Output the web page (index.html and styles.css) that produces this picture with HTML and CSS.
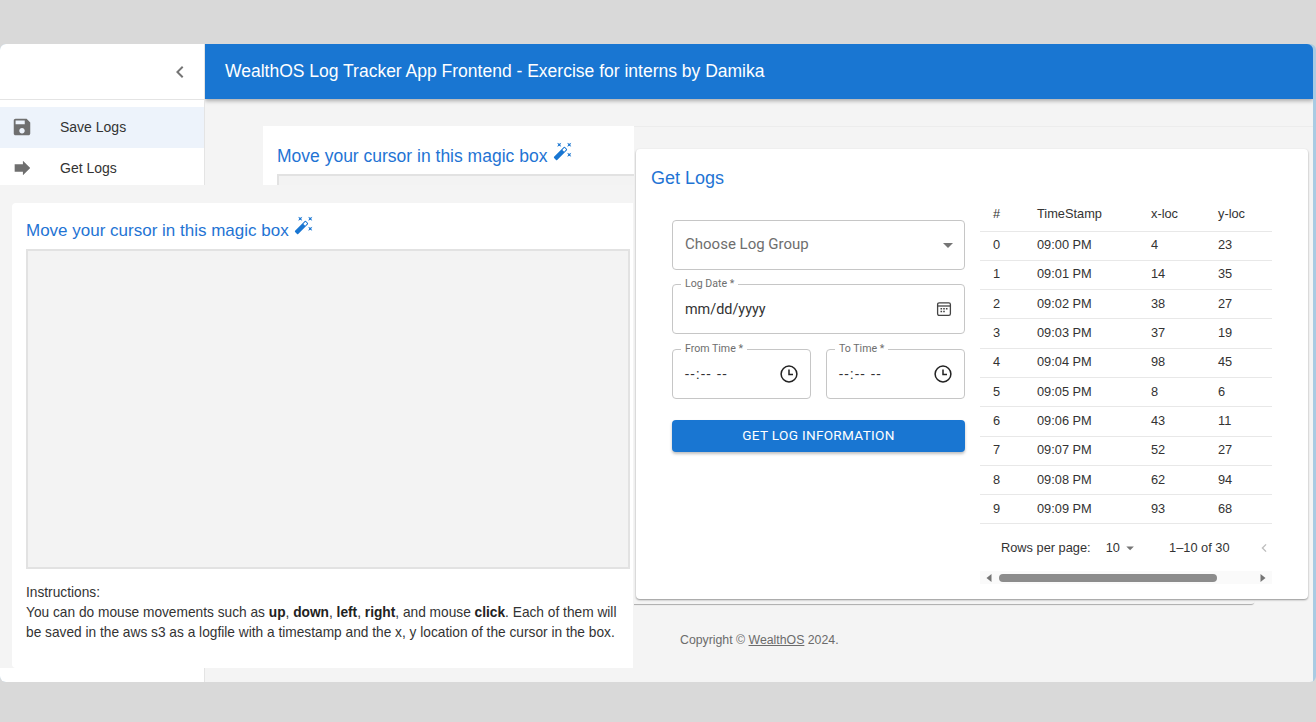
FILE: index.html
```html
<!DOCTYPE html>
<html lang="en">
<head>
<meta charset="utf-8">
<title>WealthOS Log Tracker</title>
<link rel="stylesheet" href="styles.css">
</head>
<body>
<div class="app">
  <aside class="sidebar">
    <div class="side-head">
      <svg class="chev" viewBox="0 0 24 24"><path d="M15.41 7.41 14 6l-6 6 6 6 1.41-1.41L10.83 12z"/></svg>
    </div>
    <nav class="side-list">
      <a class="side-item selected">
        <svg class="side-icon" viewBox="0 0 24 24"><path d="M17 3H5c-1.11 0-2 .9-2 2v14c0 1.1.89 2 2 2h14c1.1 0 2-.9 2-2V7l-4-4zm-5 16c-1.66 0-3-1.34-3-3s1.34-3 3-3 3 1.34 3 3-1.34 3-3 3zm3-10H5V5h10v4z"/></svg>
        <span>Save Logs</span>
      </a>
      <a class="side-item">
        <svg class="side-icon" viewBox="0 0 24 24"><path d="M4 8h9V4l8 8-8 8v-4H4z"/></svg>
        <span>Get Logs</span>
      </a>
    </nav>
  </aside>
  <div class="main">
    <header class="topbar">WealthOS Log Tracker App Frontend - Exercise for interns by Damika</header>
    <div class="content">
      <section class="back-card">
        <div class="back-left">
          <h2 class="magic-title">Move your cursor in this magic box <svg class="wand" viewBox="0 0 24 24"><path d="M7.5 5.6 10 7 8.6 4.5 10 2 7.5 3.4 5 2l1.4 2.5L5 7zm12 9.8L17 14l1.4 2.5L17 19l2.5-1.4L22 19l-1.4-2.5L22 14zM22 2l-2.5 1.4L17 2l1.4 2.5L17 7l2.5-1.4L22 7l-1.4-2.5zm-7.63 5.29a.9959.9959 0 0 0-1.41 0L1.29 18.96c-.39.39-.39 1.02 0 1.41l2.34 2.34c.39.39 1.02.39 1.41 0L16.7 11.05c.39-.39.39-1.02 0-1.41l-2.33-2.35zm-1.03 5.49-2.12-2.12 2.44-2.44 2.12 2.12-2.44 2.44z"/></svg></h2>
          <div class="back-box"></div>
        </div>
      </section>
      <footer class="copyright">Copyright © <a class="copy-link">WealthOS</a> 2024.</footer>
    </div>
  </div>
</div>

<div class="hairline"></div>

<section class="magic-panel">
  <div class="magic-card">
    <h2 class="magic-title front-title">Move your cursor in this magic box <svg class="wand" viewBox="0 0 24 24"><path d="M7.5 5.6 10 7 8.6 4.5 10 2 7.5 3.4 5 2l1.4 2.5L5 7zm12 9.8L17 14l1.4 2.5L17 19l2.5-1.4L22 19l-1.4-2.5L22 14zM22 2l-2.5 1.4L17 2l1.4 2.5L17 7l2.5-1.4L22 7l-1.4-2.5zm-7.63 5.29a.9959.9959 0 0 0-1.41 0L1.29 18.96c-.39.39-.39 1.02 0 1.41l2.34 2.34c.39.39 1.02.39 1.41 0L16.7 11.05c.39-.39.39-1.02 0-1.41l-2.33-2.35zm-1.03 5.49-2.12-2.12 2.44-2.44 2.12 2.12-2.44 2.44z"/></svg></h2>
    <div class="magic-box"></div>
    <p class="instructions">Instructions:<br>You can do mouse movements such as <b>up</b>, <b>down</b>, <b>left</b>, <b>right</b>, and mouse <b>click</b>. Each of them will be saved in the aws s3 as a logfile with a timestamp and the x, y location of the cursor in the box.</p>
  </div>
</section>

<section class="logs-card">
  <h2 class="logs-title">Get Logs</h2>
  <div class="logs-body">
    <form class="log-form">
      <div class="field select-field">
        <span class="placeholder">Choose Log Group</span>
        <svg class="drop" viewBox="0 0 24 24"><path d="M7 10l5 5 5-5z"/></svg>
      </div>
      <div class="field">
        <span class="float-label">Log Date *</span>
        <span class="value">mm/dd/yyyy</span>
        <svg class="cal" viewBox="0 0 16 16"><rect x="1.6" y="1.8" width="12.8" height="12.6" rx="1.6"/><path d="M1.6 5h12.8"/><path class="cal-dots" d="M4.5 7h1.6v1.4H4.5zM7.2 7h1.6v1.4H7.2zM9.9 7h1.6v1.4H9.9zM4.5 9.8h1.6v1.4H4.5zM7.2 9.8h1.6v1.4H7.2z"/></svg>
      </div>
      <div class="time-row">
        <div class="field">
          <span class="float-label">From Time *</span>
          <span class="value time-value">--:-- --</span>
          <svg class="clock" viewBox="0 0 18 18"><circle cx="9" cy="9" r="7.9"/><path d="M9 4.5V9.5H13"/></svg>
        </div>
        <div class="field">
          <span class="float-label">To Time *</span>
          <span class="value time-value">--:-- --</span>
          <svg class="clock" viewBox="0 0 18 18"><circle cx="9" cy="9" r="7.9"/><path d="M9 4.5V9.5H13"/></svg>
        </div>
      </div>
      <button class="submit" type="button">GET LOG INFORMATION</button>
    </form>
    <div class="table-wrap">
      <table class="log-table">
        <colgroup><col class="c-id"><col class="c-time"><col class="c-x"><col class="c-y"></colgroup>
        <thead><tr><th>#</th><th>TimeStamp</th><th>x-loc</th><th>y-loc</th></tr></thead>
        <tbody>
          <tr><td>0</td><td>09:00 PM</td><td>4</td><td>23</td></tr>
          <tr><td>1</td><td>09:01 PM</td><td>14</td><td>35</td></tr>
          <tr><td>2</td><td>09:02 PM</td><td>38</td><td>27</td></tr>
          <tr><td>3</td><td>09:03 PM</td><td>37</td><td>19</td></tr>
          <tr><td>4</td><td>09:04 PM</td><td>98</td><td>45</td></tr>
          <tr><td>5</td><td>09:05 PM</td><td>8</td><td>6</td></tr>
          <tr><td>6</td><td>09:06 PM</td><td>43</td><td>11</td></tr>
          <tr><td>7</td><td>09:07 PM</td><td>52</td><td>27</td></tr>
          <tr><td>8</td><td>09:08 PM</td><td>62</td><td>94</td></tr>
          <tr><td>9</td><td>09:09 PM</td><td>93</td><td>68</td></tr>
        </tbody>
      </table>
      <div class="pager">
        <span class="rows-label">Rows per page:</span>
        <span class="rows-value">10</span>
        <svg class="pager-drop" viewBox="0 0 24 24"><path d="M7 10l5 5 5-5z"/></svg>
        <span class="range">1–10 of 30</span>
        <svg class="pager-prev" viewBox="0 0 24 24"><path d="M15.41 7.41 14 6l-6 6 6 6 1.41-1.41L10.83 12z"/></svg>
      </div>
      <div class="scrollbar">
        <svg class="sb-arrow" viewBox="0 0 8 10"><path d="M6.5 1v8L1.5 5z"/></svg>
        <div class="sb-track"><div class="sb-thumb"></div></div>
        <svg class="sb-arrow" viewBox="0 0 8 10"><path d="M1.5 1v8l5-4z"/></svg>
      </div>
    </div>
  </div>
</section>
</body>
</html>
```

FILE: styles.css
```css
* { box-sizing: border-box; }
html, body { margin: 0; height: 100%; }
body {
  position: relative;
  height: 722px;
  overflow: hidden;
  padding-top: 44px;
  background: #d9d9d9;
  font-family: "Liberation Sans", Arial, sans-serif;
  color: rgba(0, 0, 0, 0.87);
}
.app {
  display: flex;
  width: 1316px;
  height: 638px;
  border-radius: 6px;
  overflow: hidden;
  background: #a9cbe3;
}
.sidebar {
  flex: 0 0 205px;
  background: #fff;
  border-right: 1px solid #e4e4e4;
}
.side-head {
  display: flex;
  align-items: center;
  justify-content: flex-end;
  height: 56px;
  padding-right: 12px;
  border-bottom: 1px solid #e4e4e4;
}
.chev { width: 24px; height: 24px; fill: #757575; }
.side-list { padding-top: 7px; }
.side-item {
  display: flex;
  align-items: center;
  height: 41px;
  padding-left: 11px;
  padding-bottom: 2px;
  font-size: 14px;
  color: #333;
}
.side-item.selected { background: #edf3fb; }
.side-icon { width: 22px; height: 22px; margin-right: 27px; fill: #6f6f6f; }
.main {
  flex: 1;
  margin-right: 3px;
  display: flex;
  flex-direction: column;
  border-top-right-radius: 6px;
  overflow: hidden;
}
.topbar {
  position: relative;
  z-index: 1;
  height: 55px;
  display: flex;
  align-items: center;
  padding-left: 20px;
  flex: none;
  background: #1976d2;
  color: #fff;
  font-size: 17.5px;
  box-shadow: 0 2px 4px rgba(0, 0, 0, 0.3);
}
.content {
  flex: 1;
  background: #f4f4f4;
  padding: 27px 0 0 58px;
}
.back-card {
  width: 992px;
  height: 478px;
  background: #f4f4f4;
  border-radius: 0 0 4px 4px;
  box-shadow: 0 2px 1px -1px rgba(0, 0, 0, 0.3);
}
.back-left {
  width: 371px;
  height: 59px;
  padding: 15px 0 0 14px;
  background: #fff;
}
.back-box {
  height: 11px;
  margin-top: 7px;
  background: #f3f3f3;
  border-top: 2px solid #e2e2e2;
  border-left: 2px solid #e2e2e2;
}
.magic-title {
  margin: 0;
  height: 26px;
  font-size: 17.5px;
  line-height: 26px;
  font-weight: 400;
  color: #1f74d4;
  white-space: nowrap;
}
.front-title { font-size: 17px; line-height: 24px; }
.wand { width: 20px; height: 20px; margin-left: 1px; vertical-align: 1px; fill: #1976d2; }
.copyright {
  margin: 29px 0 0 417px;
  font-size: 12.3px;
  color: #6b6b6b;
  line-height: 14px;
}
.copy-link { text-decoration: underline; }
.hairline {
  position: absolute;
  left: 634px;
  top: 126px;
  width: 679px;
  height: 1px;
  background: #ececec;
}
.magic-panel {
  position: absolute;
  left: 0;
  top: 185px;
  width: 634px;
  height: 483px;
  padding: 18px 1px 0 12px;
  background: #f4f4f4;
}
.magic-card {
  height: 100%;
  background: #fff;
  border-radius: 4px 0 0 4px;
  padding: 12px 14px 0 14px;
}
.magic-box {
  width: 604px;
  height: 320px;
  margin-top: 8px;
  background: #f3f3f3;
  border: 2px solid #e2e2e2;
}
.instructions {
  margin: 14px 0 0;
  width: 595px;
  font-size: 13.72px;
  line-height: 20px;
  color: #333;
}
.instructions b { color: #222; }
.logs-card {
  position: absolute;
  left: 636px;
  top: 149px;
  width: 672px;
  height: 450px;
  padding: 17px 15px 0;
  background: #fff;
  border-radius: 4px;
  box-shadow: 0 1px 2px rgba(0, 0, 0, 0.4);
}
.logs-title {
  margin: 0;
  font-size: 18px;
  line-height: 24px;
  font-weight: 400;
  color: #1f74d4;
}
.logs-body {
  display: flex;
  margin-top: 8px;
}
.log-form {
  display: flex;
  flex: none;
  flex-direction: column;
  gap: 14px;
  width: 293px;
  margin: 22px 0 0 21px;
  font-family: Roboto, sans-serif;
}
.field {
  position: relative;
  display: flex;
  flex: none;
  align-items: center;
  justify-content: space-between;
  height: 50px;
  padding: 0 12px;
  border: 1px solid #c6c6c6;
  border-radius: 4px;
}
.placeholder { font-size: 15px; color: #6e6e6e; margin-bottom: 2px; }
.value { font-size: 14.4px; color: #333; }
.time-value { letter-spacing: 1.5px; }
.drop { width: 24px; height: 24px; margin-right: -8px; fill: #757575; }
.float-label {
  position: absolute;
  left: 8px;
  top: -7px;
  padding: 0 4px;
  background: #fff;
  font-size: 10.6px;
  line-height: 12px;
  color: #6e6e6e;
}
.cal { width: 16px; height: 16px; margin-right: 0; fill: none; stroke: #444; stroke-width: 1.3; }
.cal-dots { fill: #444; stroke: none; }
.clock { width: 18px; height: 18px; fill: none; stroke: #222; stroke-width: 1.5; margin-right: 0; }
.time-row { display: flex; gap: 15px; margin-top: 1px; }
.time-row .field { flex: 1; }
.submit {
  height: 32px;
  margin-top: 7px;
  padding: 0 0 3px;
  border: 0;
  border-radius: 4px;
  background: #1976d2;
  color: #fff;
  font-family: Roboto, sans-serif;
  font-size: 13.6px;
  font-weight: 400;
  letter-spacing: 0.3px;
  box-shadow: 0 2px 3px rgba(0, 0, 0, 0.25);
}
.table-wrap { flex: none; width: 292px; margin-left: 15px; }
.log-table {
  width: 292px;
  table-layout: fixed;
  border-collapse: collapse;
  font-size: 12.8px;
  color: #333;
}
.c-id { width: 44px; }
.c-time { width: 114px; }
.c-x { width: 67px; }
.c-y { width: 67px; }
.log-table th, .log-table td {
  padding: 0 0 0 13px;
  text-align: left;
  font-weight: 400;
  border-bottom: 1px solid #e8e8e8;
}
.log-table th { height: 33px; padding-bottom: 2px; }
.log-table td { height: 29.3px; padding-bottom: 2px; }
.pager {
  display: flex;
  align-items: center;
  height: 47px;
  padding-left: 21px;
  font-size: 12.8px;
  color: #333;
  white-space: nowrap;
}
.rows-value { margin-left: 15px; }
.pager-drop { width: 20px; height: 20px; margin-left: 1px; fill: #757575; }
.range { margin-left: 30px; }
.pager-prev { width: 18px; height: 18px; margin-left: 26px; fill: #bdbdbd; }
.scrollbar {
  display: flex;
  align-items: center;
  height: 13px;
  background: #fafafa;
}
.sb-arrow { width: 18px; height: 10px; fill: #757575; flex: none; }
.sb-track { flex: 1; padding-right: 37px; }
.sb-thumb { height: 8px; margin-left: 1px; border-radius: 4px; background: #8c8c8c; }
```
